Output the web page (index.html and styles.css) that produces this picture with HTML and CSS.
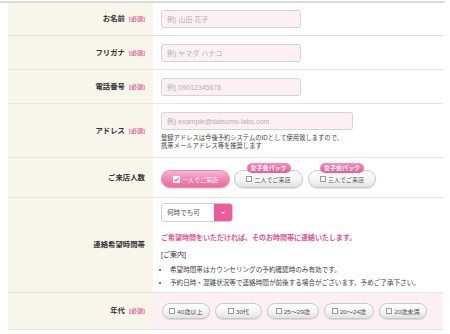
FILE: index.html
```html
<!DOCTYPE html>
<html lang="ja">

<head>
    <meta charset="UTF-8">
    <title>カウンセリング予約フォーム</title>
    <link rel="stylesheet" href="styles.css">
</head>

<body>
    <div class="topline"></div>
    <div class="form">
        <div class="row">
            <div class="label">お名前<span class="req">[必須]</span></div>
            <div class="field"><input class="text" type="text" placeholder="例) 山田 花子"></div>
        </div>
        <div class="row">
            <div class="label">フリガナ<span class="req">[必須]</span></div>
            <div class="field"><input class="text" type="text" placeholder="例) ヤマダ ハナコ"></div>
        </div>
        <div class="row">
            <div class="label">電話番号<span class="req">[必須]</span></div>
            <div class="field"><input class="text" type="text" placeholder="例) 09012345678"></div>
        </div>
        <div class="row">
            <div class="label">アドレス<span class="req">[必須]</span></div>
            <div class="field field-mail">
                <input class="text text-wide" type="text" placeholder="例) example@datsumo-labo.com">
                <p class="note">登録アドレスは今後予約システムのIDとして使用致しますので、<br>携帯メールアドレス等を推奨します</p>
            </div>
        </div>
        <div class="row">
            <div class="label">ご来店人数</div>
            <div class="field field-people">
                <label class="pill pill-on">
                    <svg class="check" width="7" height="7" viewBox="0 0 7 7">
                        <rect x="0.5" y="0.5" width="6" height="6" fill="#fff" stroke="#fff"/>
                        <path d="M1.3 3.4 L2.9 5 L5.8 1.6" fill="none" stroke="#ec6a9f" stroke-width="1.2"/>
                    </svg>一人でご来店
                </label>
                <label class="pill"><span class="badge">女子会パック</span><span class="box"></span>二人でご来店</label>
                <label class="pill pill-last"><span class="badge">女子会パック</span><span class="box"></span>三人でご来店</label>
            </div>
        </div>
        <div class="row">
            <div class="label">連絡希望時間帯</div>
            <div class="field field-time">
                <div class="select">
                    <span class="select-text">何時でも可</span>
                    <span class="select-arrow"></span>
                </div>
                <p class="hint">ご希望時間をいただければ、そのお時間帯に連絡いたします。</p>
                <p class="guide">[ご案内]</p>
                <ul class="guide-list">
                    <li>希望時間帯はカウンセリングの予約確認時のみ有効です。</li>
                    <li>予約日時・混雑状況等で連絡時間が前後する場合がございます。予めご了承下さい。</li>
                </ul>
            </div>
        </div>
        <div class="row">
            <div class="label">年代<span class="req">[必須]</span></div>
            <div class="field field-age">
                <label class="pill pill-small age-40"><span class="box"></span>40歳以上</label>
                <label class="pill pill-small age-30"><span class="box"></span>30代</label>
                <label class="pill pill-small age-25"><span class="box"></span>25〜29歳</label>
                <label class="pill pill-small age-20"><span class="box"></span>20〜24歳</label>
                <label class="pill pill-small age-19"><span class="box"></span>20歳未満</label>
            </div>
        </div>
    </div>
</body>

</html>
```

FILE: styles.css
```css
* {
    box-sizing: border-box;
    margin: 0;
    padding: 0;
}

body {
    background: #fff;
    font-family: "Liberation Sans", "Noto Sans CJK JP", sans-serif;
    color: #333;
}

.topline {
    margin: 1px 5px 0 0;
    height: 2px;
    background: #dadada;
}

.form {
    margin: 0 7px 0 8px;
}

.row {
    display: grid;
    grid-template-columns: 145px 1fr;
}

.label {
    background: #f8f6ea;
    border-bottom: 1px solid #ebe6d5;
    display: flex;
    align-items: center;
    justify-content: flex-end;
    padding-right: 8px;
    font-size: 7.4px;
    font-weight: bold;
    color: #333;
    line-height: 10px;
}

.req {
    color: #e8679a;
    font-size: 6px;
    margin-left: 4px;
}

.field {
    border-bottom: 1px solid #e3e3e3;
    padding: 8px 8px 7px;
}

.row:first-child .field {
    padding-top: 7px;
}

.text {
    display: block;
    width: 140px;
    height: 18px;
    border: 1px solid #d4d4d4;
    border-radius: 3px;
    background: #fdf0f5;
    padding: 0 5px;
    font-family: inherit;
    font-size: 7px;
    outline: none;
}

.text::placeholder {
    color: #b0b0b0;
}

.text-wide {
    width: 192px;
}

.note {
    margin-top: 4px;
    font-size: 6.3px;
    line-height: 8px;
    color: #444;
}

.field-people {
    display: flex;
    padding: 12px 8px 9px;
}

.pill {
    position: relative;
    display: flex;
    align-items: center;
    justify-content: center;
    width: 69px;
    height: 18px;
    margin-right: 4px;
    border: 1px solid #c9c9c9;
    border-radius: 9px;
    background: linear-gradient(#ffffff, #f4f4f4 55%, #e2e2e2);
    box-shadow: 0 1px 1px rgba(0, 0, 0, 0.12);
    font-size: 6px;
    color: #555;
    white-space: nowrap;
}

.pill-last {
    margin-left: 1px;
    width: 68px;
}

.pill-on {
    border-color: #ee8ab2;
    background: linear-gradient(#f9b6d1, #f08ab3 50%, #ec6a9f);
    color: #fff;
}

.check {
    margin-right: 2px;
}

.box {
    display: inline-block;
    width: 6px;
    height: 6px;
    margin-right: 2px;
    border: 1px solid #999;
    background: #fff;
}

.badge {
    position: absolute;
    top: -8px;
    left: 50%;
    transform: translateX(-50%);
    padding: 0 4px;
    height: 10px;
    line-height: 10px;
    border-radius: 5px;
    background: linear-gradient(#f58fbb, #e95b98);
    color: #fff;
    font-size: 6px;
    font-weight: bold;
}

.field-time {
    padding: 5px 8px 3px;
}

.select {
    display: flex;
    width: 72px;
    height: 19px;
    border: 1px solid #cfcfcf;
    border-radius: 3px;
    overflow: hidden;
}

.select-text {
    flex: 1;
    padding-left: 5px;
    font-size: 6.6px;
    line-height: 17px;
    color: #555;
}

.select-arrow {
    position: relative;
    width: 18px;
    background: #ee5b9b;
}

.select-arrow::after {
    content: "";
    position: absolute;
    left: 7px;
    top: 8px;
    border-left: 2px solid transparent;
    border-right: 2px solid transparent;
    border-top: 2px solid #fff;
}

.hint {
    margin-top: 10px;
    font-size: 7px;
    line-height: 11px;
    font-weight: bold;
    color: #e4528e;
}

.guide {
    margin-top: 6px;
    font-size: 7px;
    line-height: 11px;
    color: #333;
}

.guide-list {
    margin-top: 3px;
    padding-left: 9px;
    font-size: 6.6px;
    line-height: 13px;
    color: #444;
}

.field-age {
    display: flex;
    background: #fdf0f4;
    padding: 10px 8px 10px 9px;
}

.pill-small {
    height: 16px;
    margin-right: 5px;
    border-radius: 8px;
    font-size: 6.2px;
}

.age-40 { width: 48px; }
.age-30 { width: 47px; }
.age-25 { width: 52px; }
.age-20 { width: 50px; }
.age-19 { width: 48px; }
```
